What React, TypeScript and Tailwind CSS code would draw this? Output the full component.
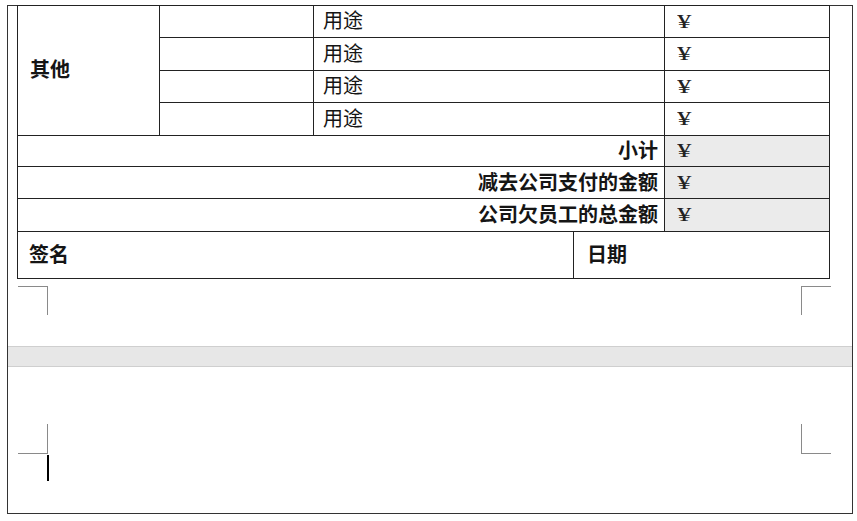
const ROWS = [32, 33, 32, 32];
const TOTALS = [
  { label: '小计', h: 31 },
  { label: '减去公司支付的金额', h: 32 },
  { label: '公司欠员工的总金额', h: 33 },
];

function Yen() {
  return (
    <span className="inline-block origin-left scale-x-[1.6] font-['Liberation_Serif',serif] text-[18px] leading-none text-[#222]">
      ¥
    </span>
  );
}

export default function App() {
  return (
    <div className="h-[521px] w-[857px] overflow-hidden bg-white pl-[7px] pt-[5px] font-['Noto_Sans_CJK_SC',sans-serif] text-[#151515]">
      <div className="flex h-[509px] w-[846px] flex-col border border-[#333]">
        {/* expense table */}
        <div className="-mt-px ml-[9px] w-[813px] border border-[#222]">
          <div className="flex border-b border-[#222]">
            <div className="flex w-[142px] items-center border-r border-[#222] pb-[3px] pl-[12px] text-[20px] font-bold">
              其他
            </div>
            <div className="flex flex-1 flex-col">
              {ROWS.map((h, i) => (
                <div
                  key={i}
                  className={`flex ${i < ROWS.length - 1 ? 'border-b border-[#222]' : ''}`}
                  style={{ height: h }}
                >
                  <div className="w-[154px] border-r border-[#222]" />
                  <div className="flex w-[351px] items-center border-r border-[#222] pb-[3px] pl-[9px] text-[20px]">
                    用途
                  </div>
                  <div className="flex flex-1 items-center pl-[12px]">
                    <Yen />
                  </div>
                </div>
              ))}
            </div>
          </div>

          {TOTALS.map(t => (
            <div key={t.label} className="flex border-b border-[#222]" style={{ height: t.h }}>
              <div className="flex w-[647px] items-center justify-end border-r border-[#222] pb-[2px] pr-[6px] text-[20px] font-bold">
                {t.label}
              </div>
              <div className="flex flex-1 items-center bg-[#ebebeb] pl-[12px]">
                <Yen />
              </div>
            </div>
          ))}

          <div className="flex h-[46px]">
            <div className="flex w-[556px] items-center border-r border-[#222] pb-[2px] pl-[11px] text-[20px] font-bold">
              签名
            </div>
            <div className="flex flex-1 items-center pb-[2px] pl-[13px] text-[20px] font-bold">日期</div>
          </div>
        </div>

        {/* page corner marks */}
        <div className="mt-[7px] flex justify-between pl-[10px] pr-[21px]">
          <div className="h-[29px] w-[30px] border-r border-t border-[#8a8a8a]" />
          <div className="h-[29px] w-[30px] border-l border-t border-[#8a8a8a]" />
        </div>

        {/* page break */}
        <div className="mt-[31px] h-[21px] border-y border-[#cfcfcf] bg-[#e7e7e7]" />

        <div className="mt-[57px] flex justify-between pl-[10px] pr-[21px]">
          <div className="h-[30px] w-[30px] border-b border-r border-[#8a8a8a]" />
          <div className="h-[30px] w-[30px] border-b border-l border-[#8a8a8a]" />
        </div>

        <div className="ml-[39px] mt-px h-[26px] w-[2px] bg-black" />
      </div>
    </div>
  );
}
